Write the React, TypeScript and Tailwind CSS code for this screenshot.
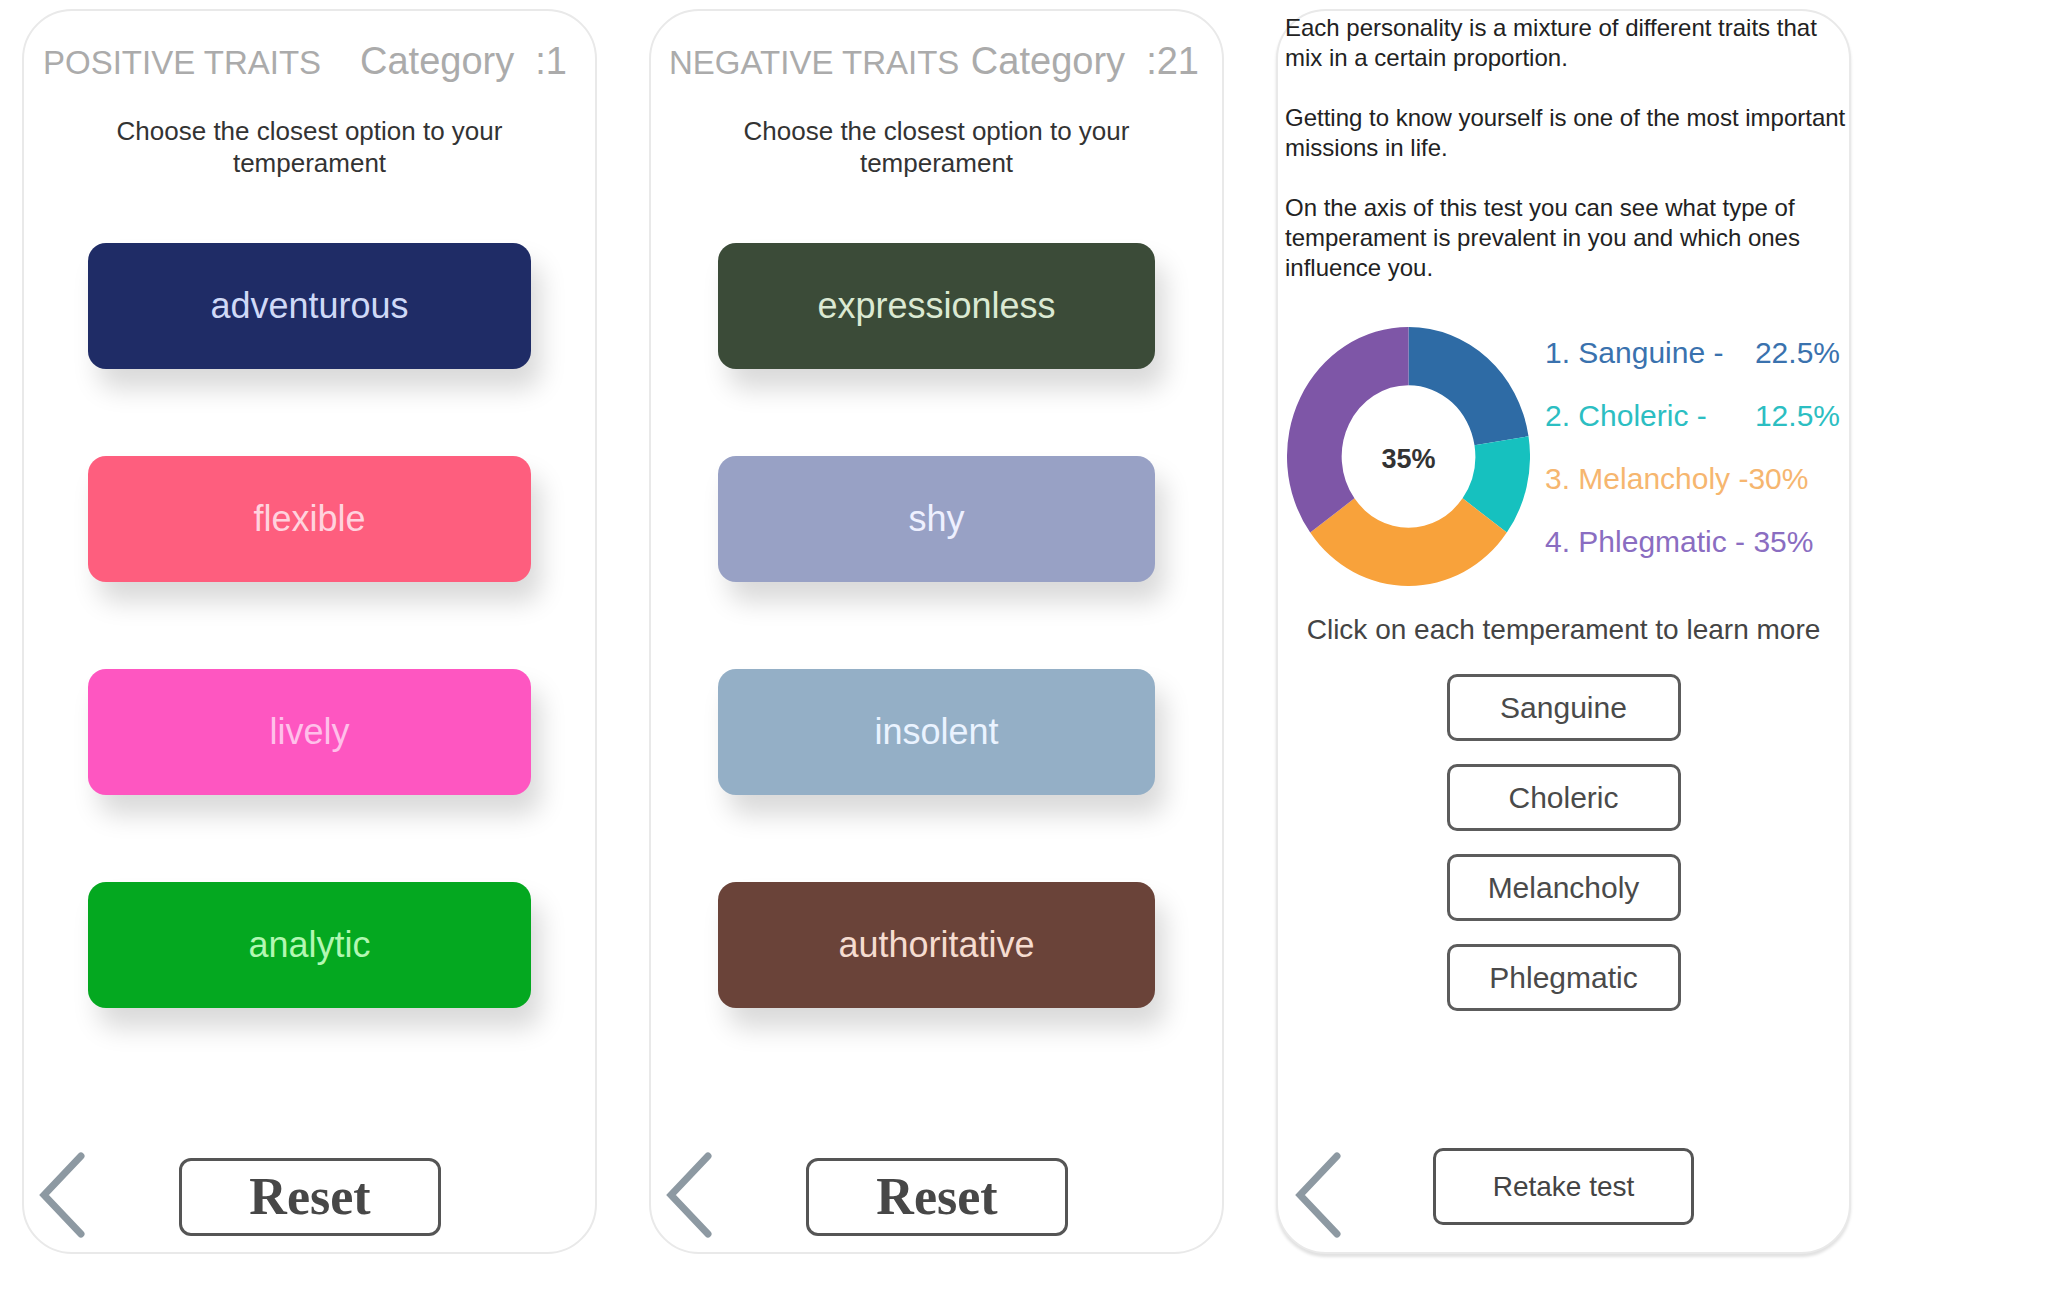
import React from "react";

type Trait = { label: string; bg: string; fg: string };

const positive: Trait[] = [
  { label: "adventurous", bg: "bg-[#1f2c66]", fg: "text-[#cfd9f7]" },
  { label: "flexible", bg: "bg-[#fe5e7e]", fg: "text-[#ffd3de]" },
  { label: "lively", bg: "bg-[#fe56c1]", fg: "text-[#ffc0ea]" },
  { label: "analytic", bg: "bg-[#04a820]", fg: "text-[#b2f7b2]" },
];

const negative: Trait[] = [
  { label: "expressionless", bg: "bg-[#3b4b38]", fg: "text-[#dbe9d2]" },
  { label: "shy", bg: "bg-[#98a1c5]", fg: "text-[#eef0ff]" },
  { label: "insolent", bg: "bg-[#94afc6]", fg: "text-[#eaf3ff]" },
  { label: "authoritative", bg: "bg-[#6a4339]", fg: "text-[#f5dcd0]" },
];

const sectors = [
  { v: 22.5, c: "#2e6ba5" },
  { v: 12.5, c: "#16c1bf" },
  { v: 30, c: "#f8a23b" },
  { v: 35, c: "#7e56a7" },
];

function Chevron() {
  return (
    <svg width="50" height="86" viewBox="0 0 50 86" className="shrink-0">
      <polyline
        points="44,4 7,43 44,82"
        fill="none"
        stroke="#8d99a2"
        strokeWidth="7"
        strokeLinecap="round"
        strokeLinejoin="miter"
      />
    </svg>
  );
}

function Donut() {
  const R = 100;
  const r = 55;
  const pt = (deg: number, rad: number) => {
    const t = (deg * Math.PI) / 180;
    return `${(rad * Math.sin(t)).toFixed(3)} ${(-rad * Math.cos(t)).toFixed(3)}`;
  };
  let acc = 0;
  return (
    <div className="relative w-[243px] h-[259px] shrink-0 mt-[6px]">
      <svg width="243" height="259" viewBox="-100 -100 200 200" preserveAspectRatio="none">
        {sectors.map((s) => {
          const a0 = acc * 3.6;
          acc += s.v;
          const a1 = acc * 3.6;
          const large = a1 - a0 > 180 ? 1 : 0;
          return (
            <path
              key={s.c}
              d={`M ${pt(a0, R)} A ${R} ${R} 0 ${large} 1 ${pt(a1, R)} L ${pt(a1, r)} A ${r} ${r} 0 ${large} 0 ${pt(a0, r)} Z`}
              fill={s.c}
            />
          );
        })}
      </svg>
      <div className="absolute inset-0 flex items-center justify-center pt-[6px] text-[27px] font-bold text-[#333]">
        35%
      </div>
    </div>
  );
}

function TraitPanel({
  title,
  category,
  traits,
  padL,
  padR,
  btnW,
}: {
  title: string;
  category: string;
  traits: Trait[];
  padL: string;
  padR: string;
  btnW: string;
}) {
  return (
    <div className="w-[575px] h-[1245px] shrink-0 border-2 border-[#e9e9e9] rounded-[50px] flex flex-col bg-white">
      <div className={`flex items-baseline justify-between pt-[28px] text-[#ababab] ${padL} ${padR}`}>
        <span className="text-[33px] leading-[44px] whitespace-pre">{title}</span>
        <span className="text-[38px] leading-[44px] whitespace-pre">{category}</span>
      </div>
      <div className="mt-[30px] text-center text-[26px] leading-[32px] text-[#333]">
        Choose the closest option to your
        <br />
        temperament
      </div>
      <div className="mt-[64px] flex flex-col items-center gap-[87px]">
        {traits.map((t) => (
          <div
            key={t.label}
            className={`${btnW} h-[126px] rounded-[18px] flex items-center justify-center text-[36px] shadow-[10px_20px_26px_rgba(0,0,0,0.15)] ${t.bg} ${t.fg}`}
          >
            {t.label}
          </div>
        ))}
      </div>
      <div className="mt-auto pb-[14px] pl-[13px] flex items-end">
        <Chevron />
        <div className="ml-[92px] mb-[2px] w-[262px] h-[78px] border-[3px] border-[#555] rounded-[12px] flex items-center justify-center font-['Liberation_Serif',serif] font-bold text-[52px] text-[#474747]">
          Reset
        </div>
      </div>
    </div>
  );
}

function ResultPanel() {
  const lines: (string | null)[] = [
    "Each personality is a mixture of different traits that",
    "mix in a certain proportion.",
    null,
    "Getting to know yourself is one of the most important",
    "missions in life.",
    null,
    "On the axis of this test you can see what type of",
    "temperament is prevalent in you and which ones",
    "influence you.",
  ];
  const temps = ["Sanguine", "Choleric", "Melancholy", "Phlegmatic"];
  return (
    <div className="w-[575px] h-[1245px] shrink-0 border-2 border-[#e9e9e9] rounded-[50px] flex flex-col bg-white shadow-[0_3px_3px_rgba(0,0,0,0.12)]">
      <div className="pl-[7px] pt-[2px] text-[24px] leading-[30px] text-[#222]">
        {lines.map((l, i) =>
          l === null ? (
            <div key={i} className="h-[30px]" />
          ) : (
            <div key={i} className="whitespace-nowrap">
              {l}
            </div>
          )
        )}
      </div>
      <div className="mt-[38px] pl-[9px] flex items-start gap-[15px]">
        <Donut />
        <div className="w-[295px] text-[30px] leading-[63px]">
          <div className="flex justify-between text-[#3a72ae]">
            <span>1. Sanguine -</span>
            <span>22.5%</span>
          </div>
          <div className="flex justify-between text-[#2cbec2]">
            <span>2. Choleric -</span>
            <span>12.5%</span>
          </div>
          <div className="text-[#f6b66f]">3. Melancholy -30%</div>
          <div className="text-[#8a6dc1]">4. Phlegmatic - 35%</div>
        </div>
      </div>
      <div className="mt-[27px] text-center text-[28px] leading-[34px] text-[#444]">
        Click on each temperament to learn more
      </div>
      <div className="mt-[27px] flex flex-col items-center gap-[23px]">
        {temps.map((t) => (
          <div
            key={t}
            className="w-[234px] h-[67px] border-[3px] border-[#5c5c5c] rounded-[10px] flex items-center justify-center text-[30px] text-[#4a4a4a]"
          >
            {t}
          </div>
        ))}
      </div>
      <div className="mt-auto pb-[14px] pl-[15px] flex items-end">
        <Chevron />
        <div className="ml-[90px] mb-[13px] w-[261px] h-[77px] border-[3px] border-[#555] rounded-[10px] flex items-center justify-center text-[28px] text-[#444]">
          Retake test
        </div>
      </div>
    </div>
  );
}

export default function App() {
  return (
    <div className="w-[2048px] h-[1304px] bg-white font-['Liberation_Sans',Arial,sans-serif] flex items-start gap-[52px] pt-[9px] pl-[22px]">
      <TraitPanel
        title="POSITIVE TRAITS"
        category="Category  :1"
        traits={positive}
        padL="pl-[19px]"
        padR="pr-[28px]"
        btnW="w-[443px]"
      />
      <TraitPanel
        title="NEGATIVE TRAITS"
        category="Category  :21"
        traits={negative}
        padL="pl-[18px]"
        padR="pr-[23px]"
        btnW="w-[437px]"
      />
      <ResultPanel />
    </div>
  );
}
